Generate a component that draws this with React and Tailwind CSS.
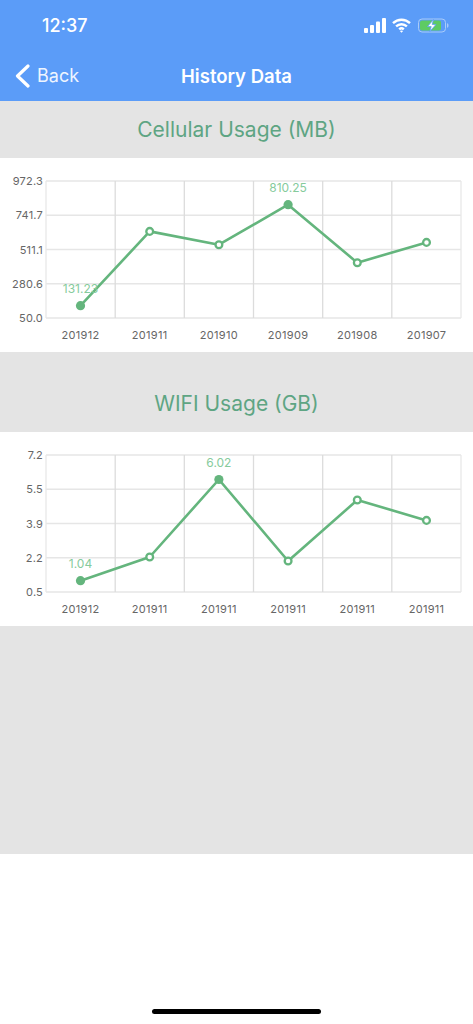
import React from "react";

const PLOT_X = [46, 115.2, 184.3, 253.5, 322.7, 391.8, 461];
const PLOT_Y = [23, 57.25, 91.5, 125.75, 160];
const POINT_X = [80.5, 149.7, 218.9, 288.1, 357.3, 426.5];

const charts = [
  {
    title: "Cellular Usage (MB)",
    yLabels: ["972.3", "741.7", "511.1", "280.6", "50.0"],
    xLabels: ["201912", "201911", "201910", "201909", "201908", "201907"],
    points: [147.7, 73.4, 86.7, 46.7, 104.7, 84.4],
    marked: { 0: "131.23", 3: "810.25" },
  },
  {
    title: "WIFI Usage (GB)",
    yLabels: ["7.2", "5.5", "3.9", "2.2", "0.5"],
    xLabels: ["201912", "201911", "201911", "201911", "201911", "201911"],
    points: [148.7, 125, 47.5, 129, 68, 88.4],
    marked: { 0: "1.04", 2: "6.02" },
  },
];

function LineChart({ yLabels, xLabels, points, marked }) {
  const line = points.map((y, i) => `${POINT_X[i]},${y}`).join(" ");
  return (
    <svg width="473" height="194" viewBox="0 0 473 194" className="block" fontFamily="Inter, 'Liberation Sans', sans-serif">
      {PLOT_Y.map((y) => (
        <line key={y} x1="46" x2="461" y1={y} y2={y} stroke="#e6e6e6" strokeWidth="1.3" />
      ))}
      {PLOT_X.map((x, i) => (
        <line key={x} x1={x} x2={x} y1="23" y2="160" stroke={i === 0 || i === 6 ? "#e8e8e8" : "#dcdcdc"} strokeWidth="1.3" />
      ))}
      {yLabels.map((label, i) => (
        <text key={label} x="43" y={PLOT_Y[i] + 4} textAnchor="end" fontSize="11" letterSpacing="0.2" fill="#666666">{label}</text>
      ))}
      {xLabels.map((label, i) => (
        <text key={i} x={POINT_X[i]} y="181" textAnchor="middle" fontSize="11" letterSpacing="0.3" fill="#666666">{label}</text>
      ))}
      <polyline points={line} fill="none" stroke="#64b57d" strokeWidth="2.6" strokeLinejoin="round" />
      {points.map((y, i) =>
        marked[i] ? (
          <circle key={i} cx={POINT_X[i]} cy={y} r="4.6" fill="#64b57d" />
        ) : (
          <circle key={i} cx={POINT_X[i]} cy={y} r="3.4" fill="white" stroke="#64b57d" strokeWidth="2.3" />
        )
      )}
      {points.map((y, i) =>
        marked[i] ? (
          <text key={i} x={POINT_X[i]} y={y - 13} textAnchor="middle" fontSize="12" fill="#86cb9c">{marked[i]}</text>
        ) : null
      )}
    </svg>
  );
}

function StatusIcons() {
  return (
    <div className="flex items-center gap-[6px]">
      <svg width="22" height="15" viewBox="0 0 22 15" fill="white">
        <rect x="0" y="10" width="4" height="5" rx="1" />
        <rect x="6" y="7" width="4" height="8" rx="1" />
        <rect x="12" y="3.5" width="4" height="11.5" rx="1" />
        <rect x="18" y="0" width="4" height="15" rx="1" />
      </svg>
      <svg width="19" height="15" viewBox="0 0 19 15" fill="none" stroke="white" strokeWidth="2.4" strokeLinecap="butt">
        <path d="M1 5.2C5.8 0.6 13.2 0.6 18 5.2" />
        <path d="M4.1 8.4C7.2 5.5 11.8 5.5 14.9 8.4" />
        <path d="M7.2 11.3C8.5 10.1 10.5 10.1 11.8 11.3" />
        <path d="M9.5 14.8L7.9 13.1C8.8 12.3 10.2 12.3 11.1 13.1Z" fill="white" stroke="none" />
      </svg>
      <svg width="31" height="15" viewBox="0 0 31 15" className="ml-[1px]">
        <rect x="0.5" y="1" width="27" height="13" rx="3.5" fill="none" stroke="#a9cbf9" strokeWidth="1" />
        <rect x="2" y="2.5" width="21" height="10" rx="2" fill="#5ecb63" />
        <path d="M29 5.2C30 5.5 30.5 6.4 30.5 7.5C30.5 8.6 30 9.5 29 9.8Z" fill="#a9cbf9" />
        <path d="M15.5 1.5L9.5 8.6H13.2L11.8 13.5L18 6.4H14.2Z" fill="white" stroke="#5b9cf8" strokeWidth="0.8" />
      </svg>
    </div>
  );
}

export default function App() {
  return (
    <div className="w-[473px] h-[1024px] bg-white relative overflow-hidden font-['Inter','Liberation_Sans',sans-serif]">
      <div className="h-[101px] bg-[#5b9cf8] text-white">
        <div className="h-[51px] flex items-start justify-between pl-[42px] pr-[25px] pt-[13px]">
          <span className="text-[18px] font-medium leading-[26px]">12:37</span>
          <div className="pt-[5px] translate-x-[1px]"><StatusIcons /></div>
        </div>
        <div className="h-[50px] pb-[1px] relative flex items-center justify-center">
          <div className="absolute left-[15px] top-[13px] flex items-center gap-[7px]">
            <svg width="15" height="24" viewBox="0 0 15 24" fill="none" stroke="white" strokeWidth="3.2" strokeLinecap="round" strokeLinejoin="round">
              <path d="M13 2L2.5 12L13 22" />
            </svg>
            <span className="text-[18px] leading-[24px] text-[#eef5ff]">Back</span>
          </div>
          <span className="text-[18.5px] font-semibold leading-[24px]">History Data</span>
        </div>
      </div>

      {charts.map((chart, i) => (
        <div key={chart.title}>
          <div className={`${i === 0 ? "h-[57px] pt-[15px]" : "h-[80px] pt-[38px]"} bg-[#e4e4e4] text-center text-[21px] leading-[28px] text-[#5ea583]`}>
            {chart.title}
          </div>
          <LineChart {...chart} />
        </div>
      ))}

      <div className="h-[228px] bg-[#e4e4e4]" />

      <div className="absolute bottom-[10px] left-[152px] w-[169px] h-[5px] rounded-full bg-black" />
    </div>
  );
}
